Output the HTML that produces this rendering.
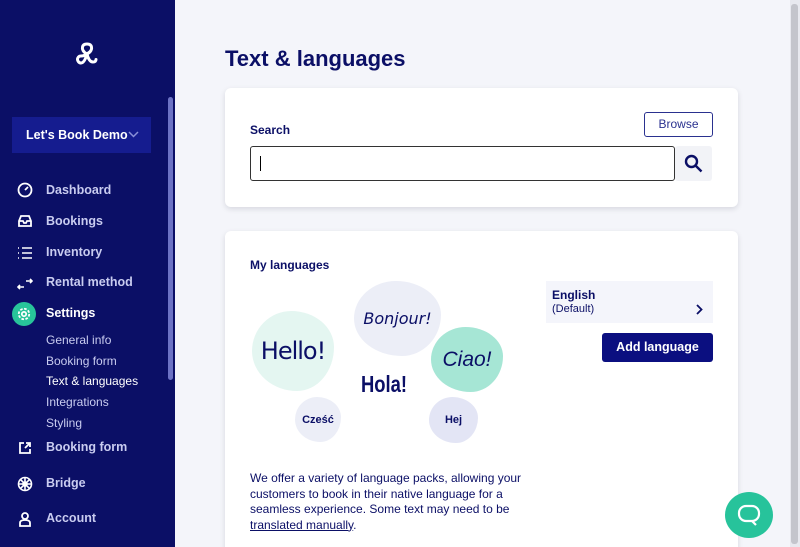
<!DOCTYPE html><html><head><style>
html,body{margin:0;width:800px;height:547px;overflow:hidden}
body{background:#f4f5fa;font-family:"Liberation Sans",sans-serif;position:relative}
.sb{position:absolute;left:0;top:0;width:175px;height:547px;background:#0b0f66;color:#c9ccf0}
.it{position:absolute;left:46px;font-size:12.5px;font-weight:bold}
.sub{position:absolute;left:46px;font-size:12px}
.ic{position:absolute;left:17px;width:16px;height:16px}
.card{position:absolute;left:225px;width:513px;background:#fff;border-radius:6px;box-shadow:0 2px 6px rgba(0,0,30,.12)}
.blob{position:absolute;border-radius:48% 52% 45% 55%/50% 45% 55% 50%;display:flex;align-items:center;justify-content:center;color:#0b0f66}
</style></head><body>
<div class="sb">
<svg style="position:absolute;left:74px;top:41px" width="26" height="26" viewBox="0 0 26 26" fill="none" stroke="#fff" stroke-width="3" stroke-linecap="round"><path d="M13 13C9 11 8 8 8.5 6 9 3.5 11 3 13 3s4 .5 4.5 3c.5 2-.5 5-4.5 7zM13 13c-2 1.5-4 2-6 2-2.5 0-3.5 2-3.5 3.5S5 22 7 22s4-2 6-9zM13 13c1 4 3 8 6 8 2 0 3-1 3-2.5"/></svg>
<div style="position:absolute;left:168px;top:97px;width:5px;height:283px;background:#6c72c4;border-radius:3px"></div>
<div style="position:absolute;left:12px;top:117px;width:139px;height:36px;background:#151c8f;color:#fff;font-weight:bold;font-size:12.5px;line-height:36px;padding-left:14px;box-sizing:border-box">Let's Book Demo<svg style="position:absolute;right:12px;top:14px" width="11" height="7" viewBox="0 0 11 7" fill="none" stroke="#8a90d8" stroke-width="1.5"><path d="M1 1l4.5 4.5L10 1"/></svg></div>
<svg class="ic" style="top:182px" viewBox="0 0 16 16" fill="none" stroke="#fff" stroke-width="1.8"><circle cx="8" cy="8" r="6.5"/><path d="M8 8l3-3"/></svg><div class="it" style="top:183px">Dashboard</div>
<svg class="ic" style="top:213px" viewBox="0 0 16 16" fill="none" stroke="#fff" stroke-width="1.8"><path d="M2 8l2-5h8l2 5v5H2zM2 8h4l1 2h2l1-2h4"/></svg><div class="it" style="top:214px">Bookings</div>
<svg class="ic" style="top:245px" viewBox="0 0 16 16" fill="none" stroke="#fff" stroke-width="1.6"><path d="M1 3h1M1 8h1M1 13h1M5 3h10M5 8h10M5 13h10"/></svg><div class="it" style="top:245px">Inventory</div>
<svg class="ic" style="top:276px" viewBox="0 0 16 16" fill="none" stroke="#fff" stroke-width="1.6"><path d="M9 5h6M13 3l2 2-2 2M7 11H1M3 9l-2 2 2 2"/></svg><div class="it" style="top:275px">Rental method</div>
<div style="position:absolute;left:12px;top:302px;width:24px;height:24px;border-radius:50%;background:#28c49a"></div>
<svg style="position:absolute;left:17px;top:307px" width="14" height="14" viewBox="0 0 16 16" fill="none" stroke="#fff" stroke-width="2"><circle cx="8" cy="8" r="2.5"/><circle cx="8" cy="8" r="6" stroke-dasharray="3 1.7"/></svg>
<div class="it" style="top:306px;color:#fff">Settings</div>
<div class="sub" style="top:333px">General info</div>
<div class="sub" style="top:354px">Booking form</div>
<div class="sub" style="top:374px;color:#fff">Text &amp; languages</div>
<div class="sub" style="top:395px">Integrations</div>
<div class="sub" style="top:416px">Styling</div>
<svg class="ic" style="top:440px" viewBox="0 0 16 16" fill="none" stroke="#fff" stroke-width="1.8"><path d="M7 3H3v10h10V9M9 3h4v4M13 3L8 8"/></svg><div class="it" style="top:440px">Booking form</div>
<svg class="ic" style="top:476px" viewBox="0 0 16 16" fill="none" stroke="#fff" stroke-width="1.6"><circle cx="8" cy="8" r="6.5"/><circle cx="8" cy="8" r="2"/><path d="M8 1.5v13M1.5 8h13M3.4 3.4l9.2 9.2M12.6 3.4l-9.2 9.2"/></svg><div class="it" style="top:476px">Bridge</div>
<svg class="ic" style="top:511px" viewBox="0 0 16 16" fill="none" stroke="#fff" stroke-width="1.8"><circle cx="8" cy="5" r="3"/><path d="M3 15v-3c0-2 2-3 5-3s5 1 5 3v3z"/></svg><div class="it" style="top:511px">Account</div>
</div>
<div style="position:absolute;left:790px;top:0;width:10px;height:547px;background:#e8e9ef"></div>
<div style="position:absolute;left:791px;top:4px;width:7px;height:540px;background:#c4c5cc;border-radius:3px"></div>
<div style="position:absolute;left:225px;top:46px;font-size:22px;font-weight:bold;color:#0b0f66">Text &amp; languages</div>
<div class="card" style="top:88px;height:119px">
<div style="position:absolute;left:25px;top:35px;font-size:12px;font-weight:bold;color:#0b0f66">Search</div>
<div style="position:absolute;left:419px;top:24px;width:67px;height:23px;border:1px solid #2a318f;border-radius:3px;font-size:12px;color:#2a318f;text-align:center;line-height:23px">Browse</div>
<div style="position:absolute;left:25px;top:58px;width:423px;height:33px;border:1px solid #333;border-radius:3px"><div style="position:absolute;left:9px;top:9px;width:1px;height:15px;background:#000"></div></div>
<div style="position:absolute;left:450px;top:58px;width:37px;height:35px;background:#f2f3f7;border-radius:3px"></div>
<svg style="position:absolute;left:459px;top:66px" width="19" height="19" viewBox="0 0 19 19" fill="none" stroke="#0b0f66" stroke-width="2.4"><circle cx="7.5" cy="7.5" r="5.5"/><path d="M11.5 11.5l6 6"/></svg>
</div>
<div class="card" style="top:231px;height:330px">
<div style="position:absolute;left:25px;top:27px;font-size:12px;font-weight:bold;color:#0b0f66">My languages</div>
<div class="blob" style="left:27px;top:80px;width:82px;height:80px;background:#e4f6f1;font-family:'DejaVu Sans',sans-serif;font-size:24px;letter-spacing:-1px">Hello!</div>
<div class="blob" style="left:129px;top:50px;width:87px;height:75px;background:#eceef7;font-style:italic;font-size:16px;font-family:'DejaVu Sans',sans-serif">Bonjour!</div>
<div class="blob" style="left:206px;top:96px;width:72px;height:65px;background:#a6e6d5;font-style:italic;font-size:21px">Ciao!</div>
<div style="position:absolute;left:136px;top:140px;font-size:23px;font-weight:bold;color:#0b0f66;transform:scaleX(.8);transform-origin:left">Hola!</div>
<div class="blob" style="left:70px;top:166px;width:46px;height:45px;background:#eceef7;font-size:11px;font-weight:bold">Cześć</div>
<div class="blob" style="left:204px;top:166px;width:49px;height:46px;background:#e3e5f5;font-size:11px;font-weight:bold">Hej</div>
<div style="position:absolute;left:25px;top:240px;width:275px;font-size:12px;line-height:15.5px;color:#0b0f66">We offer a variety of language packs, allowing your customers to book in their native language for a seamless experience. Some text may need to be <u>translated manually</u>.</div>
<div style="position:absolute;left:321px;top:50px;width:167px;height:42px;background:#f4f5fb"></div>
<div style="position:absolute;left:327px;top:57px;font-size:12px;font-weight:bold;color:#0b0f66">English</div>
<div style="position:absolute;left:327px;top:72px;font-size:11px;color:#0b0f66">(Default)</div>
<svg style="position:absolute;left:471px;top:73px" width="7" height="11" viewBox="0 0 7 11" fill="none" stroke="#0b0f66" stroke-width="1.8"><path d="M1 1l4.5 4.5L1 10"/></svg>
<div style="position:absolute;left:377px;top:102px;width:111px;height:29px;background:#0b0f80;border-radius:3px;color:#fff;font-size:12.5px;font-weight:bold;text-align:center;line-height:29px">Add language</div>
</div>
<div style="position:absolute;left:725px;top:492px;width:48px;height:46px;border-radius:50%;background:#27c39b"></div>
<svg style="position:absolute;left:737px;top:503px" width="24" height="24" viewBox="0 0 24 24" fill="none" stroke="#fff" stroke-width="2.2"><rect x="2" y="3" width="20" height="15" rx="7"/><path d="M15 18l4 4"/></svg>
</body></html>
